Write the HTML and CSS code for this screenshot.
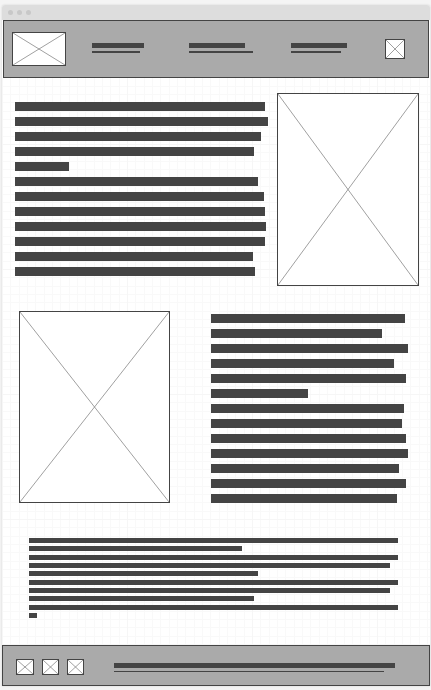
FILE: index.html
```html
<!DOCTYPE html>
<html lang="en">
<head>
<meta charset="utf-8">
<meta name="viewport" content="width=device-width, initial-scale=1">
<title>Wireframe</title>
<link rel="stylesheet" href="styles.css">
</head>
<body>
<div class="window">
  <div class="titlebar"><span class="dot"></span><span class="dot"></span><span class="dot"></span></div>
  <header class="header">
    <a class="box logo" href="#" aria-label="Home"><svg viewBox="0 0 100 100" preserveAspectRatio="none"><path d="M0 0L100 100"/><path d="M100 0L0 100"/></svg></a>
    <nav class="nav">
      <a class="link" href="#" aria-label="First section"><span class="bar" style="--inset:45px"></span><span class="rule" style="--inset:49px"></span></a>
      <a class="link" href="#" aria-label="Second section"><span class="bar" style="--inset:46px"></span><span class="rule" style="--inset:38px"></span></a>
      <a class="link" href="#" aria-label="Third section"><span class="bar" style="--inset:38px"></span><span class="rule" style="--inset:44px"></span></a>
    </nav>
    <button class="box action" type="button" aria-label="Menu"><svg viewBox="0 0 100 100" preserveAspectRatio="none"><path d="M0 0L100 100"/><path d="M100 0L0 100"/></svg></button>
  </header>
  <main class="content">
    <section class="intro">
      <div class="lines">
        <div class="line" style="--inset:3px"></div>
        <div class="line" style="--inset:0px"></div>
        <div class="line" style="--inset:7px"></div>
        <div class="line" style="--inset:14px"></div>
        <div class="line" style="--inset:199px"></div>
        <div class="line" style="--inset:10px"></div>
        <div class="line" style="--inset:4px"></div>
        <div class="line" style="--inset:3px"></div>
        <div class="line" style="--inset:2px"></div>
        <div class="line" style="--inset:3px"></div>
        <div class="line" style="--inset:15px"></div>
        <div class="line" style="--inset:13px"></div>
      </div>
      <div class="box picture"><svg viewBox="0 0 100 100" preserveAspectRatio="none"><path d="M0 0L100 100"/><path d="M100 0L0 100"/></svg></div>
    </section>
    <section class="feature">
      <div class="box picture"><svg viewBox="0 0 100 100" preserveAspectRatio="none"><path d="M0 0L100 100"/><path d="M100 0L0 100"/></svg></div>
      <div class="lines">
        <div class="line" style="--inset:3px"></div>
        <div class="line" style="--inset:26px"></div>
        <div class="line" style="--inset:0px"></div>
        <div class="line" style="--inset:14px"></div>
        <div class="line" style="--inset:2px"></div>
        <div class="line" style="--inset:100px"></div>
        <div class="line" style="--inset:4px"></div>
        <div class="line" style="--inset:6px"></div>
        <div class="line" style="--inset:2px"></div>
        <div class="line" style="--inset:0px"></div>
        <div class="line" style="--inset:9px"></div>
        <div class="line" style="--inset:2px"></div>
        <div class="line" style="--inset:11px"></div>
      </div>
    </section>
    <section class="notes">
      <div class="note" style="--inset:0px"></div>
      <div class="note" style="--inset:156px"></div>
      <div class="note" style="--inset:0px"></div>
      <div class="note" style="--inset:8px"></div>
      <div class="note" style="--inset:140px"></div>
      <div class="note" style="--inset:0px"></div>
      <div class="note" style="--inset:8px"></div>
      <div class="note" style="--inset:144px"></div>
      <div class="note" style="--inset:0px"></div>
      <div class="note" style="--inset:361px"></div>
    </section>
  </main>
  <footer class="footer">
    <div class="social">
      <a class="box" href="#" aria-label="First profile"><svg viewBox="0 0 100 100" preserveAspectRatio="none"><path d="M0 0L100 100"/><path d="M100 0L0 100"/></svg></a>
      <a class="box" href="#" aria-label="Second profile"><svg viewBox="0 0 100 100" preserveAspectRatio="none"><path d="M0 0L100 100"/><path d="M100 0L0 100"/></svg></a>
      <a class="box" href="#" aria-label="Third profile"><svg viewBox="0 0 100 100" preserveAspectRatio="none"><path d="M0 0L100 100"/><path d="M100 0L0 100"/></svg></a>
    </div>
    <div class="legal"><span class="bar" style="--inset:0px"></span><span class="rule" style="--inset:11px"></span></div>
  </footer>
</div>
</body>
</html>
```
FILE: styles.css
```css
* { box-sizing: border-box; }

body {
  margin: 0;
  padding: 5px 1px 4px 2px;
  background: #f4f4f4;
  font-family: "Liberation Sans", sans-serif;
}

.window {
  background: #fff;
  border-radius: 3px 3px 0 0;
  box-shadow: 0 0 2px #ccc;
}

.titlebar {
  display: flex;
  align-items: center;
  gap: 4px;
  height: 15px;
  padding: 0 6px;
  background: #ddd;
  border-radius: 3px 3px 0 0;
}

.dot {
  width: 5px;
  height: 5px;
  border-radius: 50%;
  background: #c8c8c8;
}

.box {
  display: block;
  padding: 0;
  border: 1px solid #444;
  background: #fff;
}

.box svg {
  display: block;
  width: 100%;
  height: 100%;
}

.box path {
  fill: none;
  stroke: #777;
  stroke-opacity: 0.7;
  stroke-width: 1px;
  vector-effect: non-scaling-stroke;
}

.header {
  display: flex;
  align-items: center;
  height: 58px;
  margin: 0 1px;
  padding: 0 23px 0 8px;
  border: 1px solid #444;
  background: #aaa;
}

.logo {
  width: 54px;
  height: 34px;
}

.nav {
  flex: 1;
  display: grid;
  grid-template-columns: 97fr 102fr 94fr;
  margin-left: 26px;
  padding-bottom: 2px;
}

.action {
  width: 20px;
  height: 20px;
}

.link,
.legal {
  display: flex;
  flex-direction: column;
  gap: 3px;
}

.bar,
.rule,
.line,
.note {
  margin-right: var(--inset);
  background: #444;
}

.bar,
.note { height: 5px; }

.rule { height: 2px; }

.line { height: 9px; }

.content {
  padding: 15px 11px 27px 13px;
  background-color: #fff;
  background-image:
    linear-gradient(90deg, #f6f6f6 1px, transparent 1px),
    linear-gradient(#f6f6f6 1px, transparent 1px),
    linear-gradient(90deg, #f9f9f9 1px, transparent 1px 8px, #f9f9f9 8px 9px, transparent 9px 17px, #f9f9f9 17px 18px, transparent 18px),
    linear-gradient(#f9f9f9 1px, transparent 1px 8px, #f9f9f9 8px 9px, transparent 9px 17px, #f9f9f9 17px 18px, transparent 18px);
  background-size: 125px 125px, 125px 125px, 25px 25px, 25px 25px;
  background-position: 0 66px, 0 66px, 0 16px, 0 16px;
}

.intro,
.feature {
  display: grid;
}

.intro {
  grid-template-columns: 253fr 142fr;
  column-gap: 9px;
}

.feature {
  grid-template-columns: 151fr 197fr;
  column-gap: 41px;
  margin: 25px 11px 0 4px;
}

.lines {
  display: grid;
  align-content: start;
  row-gap: 6px;
  padding-top: 3px;
}

.intro .lines { padding-top: 9px; }

.intro .picture { height: 193px; }

.feature .picture { height: 192px; }

.notes {
  display: flex;
  flex-direction: column;
  margin: 35px 21px 0 14px;
}

.note { margin-bottom: 3px; }

.note:nth-child(3n + 2) { margin-bottom: 4px; }

.note:last-child { margin-bottom: 0; }

.footer {
  display: flex;
  align-items: center;
  height: 41px;
  padding: 2px 34px 0 13px;
  border: 1px solid #444;
  background: #aaa;
}

.social {
  display: flex;
  gap: 8px;
}

.social .box {
  width: 17px;
  height: 16px;
}

.social .box:first-child { width: 18px; }

.legal {
  flex: 1;
  margin-left: 30px;
  padding-top: 2px;
}

.legal .rule { height: 1px; }
```
